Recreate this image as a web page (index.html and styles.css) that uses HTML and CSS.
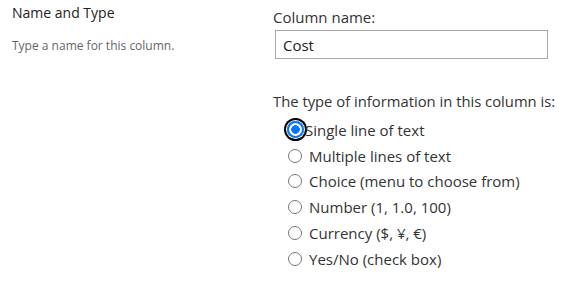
FILE: index.html
```html
<!DOCTYPE html>
<html lang="en">
<head>
    <meta charset="UTF-8">
    <title>Name and Type</title>
    <link rel="stylesheet" href="styles.css">
</head>
<body>
    <div class="section">
        <div class="section-info">
            <h3 class="section-title">Name and Type</h3>
            <p class="section-desc">Type a name for this column.</p>
        </div>
        <div class="section-body">
            <label class="field-label" for="columnName">Column name:</label>
            <input type="text" id="columnName" class="text-input" value="Cost">

            <div class="type-label">The type of information in this column is:</div>
            <div class="type-list">
                <label class="type-option"><input type="radio" name="type" class="radio" checked>Single line of text</label>
                <label class="type-option"><input type="radio" name="type" class="radio">Multiple lines of text</label>
                <label class="type-option"><input type="radio" name="type" class="radio">Choice (menu to choose from)</label>
                <label class="type-option"><input type="radio" name="type" class="radio">Number (1, 1.0, 100)</label>
                <label class="type-option"><input type="radio" name="type" class="radio">Currency ($, ¥, €)</label>
                <label class="type-option"><input type="radio" name="type" class="radio">Yes/No (check box)</label>
            </div>
        </div>
    </div>
</body>
</html>
```

FILE: styles.css
```css
body {
    margin: 0;
    font-family: "Segoe UI", "Open Sans", sans-serif;
    background-color: white;
    color: #333;
}
.section {
    display: flex;
}
.section-info {
    width: 273px;
    padding-left: 12px;
    box-sizing: border-box;
}
.section-title {
    margin: 3px 0 0;
    font-size: 14px;
    font-weight: normal;
    line-height: 19px;
    color: #222;
}
.section-desc {
    margin: 16px 0 0;
    font-size: 12px;
    line-height: 16px;
    color: #666;
}
.section-body {
    padding-top: 7px;
}
.field-label {
    display: block;
    font-size: 15px;
    line-height: 20px;
    color: #333;
}
.text-input {
    display: block;
    width: 273px;
    height: 29px;
    margin: 3px 0 0 2px;
    padding: 0 7px;
    box-sizing: border-box;
    border: 1px solid #a6a6a6;
    font-family: inherit;
    font-size: 15px;
    color: #222;
}
.type-label {
    margin-top: 32px;
    font-size: 14.8px;
    line-height: 20px;
    color: #333;
}
.type-list {
    margin-top: 6px;
    padding-left: 15px;
}
.type-option {
    display: flex;
    align-items: center;
    height: 25.8px;
    font-size: 15px;
    color: #333;
}
.radio {
    appearance: none;
    width: 14px;
    height: 14px;
    margin: 0 7px 0 0;
    border: 1px solid #767676;
    border-radius: 50%;
    box-sizing: border-box;
    background-color: white;
}
.radio:checked {
    width: 17px;
    height: 17px;
    margin: 0 1px 0 -1px;
    border: 2px solid #0075ff;
    background: radial-gradient(circle, #0075ff 0 4px, white 4.5px);
    box-shadow: 0 0 0 1px white, 0 0 0 3px black;
}
```
